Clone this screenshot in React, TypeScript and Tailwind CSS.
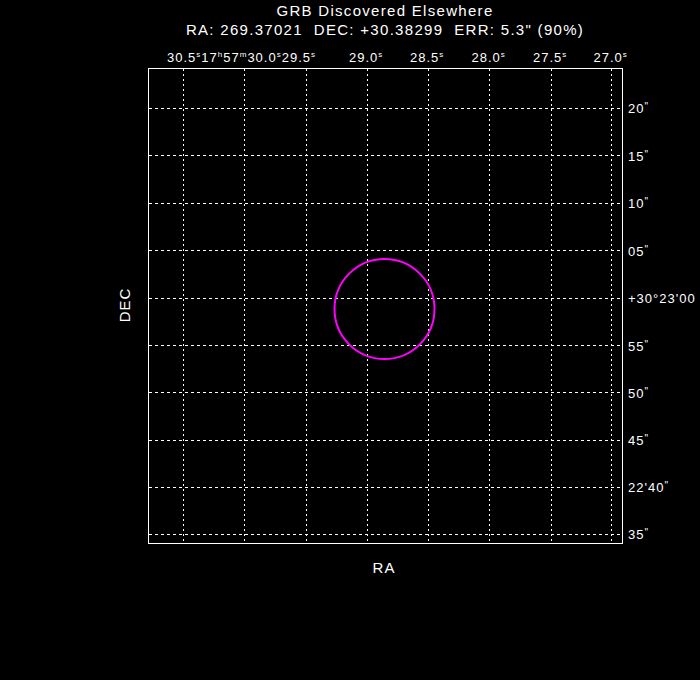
const xs = [183, 244, 306, 367, 428, 489.5, 551, 611.5];
const ys = [108, 155.5, 203, 250.5, 298, 345.5, 392.5, 440, 487, 534];
const decLabels: [string, string][] = [
  ["20", '"'], ["15", '"'], ["10", '"'], ["05", '"'], ["+30°23'00", ""],
  ["55", '"'], ["50", '"'], ["45", '"'], ["22'40", '"'], ["35", '"'],
];
const raLabels: [number, string][] = [
  [367, "29.0"], [428, "28.5"], [489.5, "28.0"], [551, "27.5"], [611.5, "27.0"],
];

export default function App() {
  return (
    <div className="w-[700px] h-[680px] bg-black text-white relative overflow-hidden" style={{ fontFamily: '"Liberation Sans", Arial, sans-serif' }}>
      <div className="pt-[1px] pl-[70px] text-center text-[15px] leading-[19px] tracking-[1.3px]">
        <div>GRB Discovered Elsewhere</div>
        <div className="whitespace-pre">RA: 269.37021  DEC: +30.38299  ERR: 5.3" (90%)</div>
      </div>
      <svg className="absolute left-0 top-0" width="700" height="680" fontFamily='"Liberation Sans", Arial, sans-serif' fill="white" letterSpacing="1" shapeRendering="crispEdges">
        <rect x="148.5" y="68.5" width="474" height="475" fill="none" stroke="white" strokeWidth="1" />
        {xs.map((x) => (
          <line key={x} x1={x} y1="69" x2={x} y2="542" stroke="white" strokeDasharray="2 3" />
        ))}
        {ys.map((y) => (
          <line key={y} x1="149" y1={y} x2="621" y2={y} stroke="white" strokeDasharray="3 3" />
        ))}
        <text x="167" y="62" fontSize="13">30.5<tspan fontSize="8" dy="-5">s</tspan><tspan dy="5">17</tspan><tspan fontSize="8" dy="-5">h</tspan><tspan dy="5">57</tspan><tspan fontSize="8" dy="-5">m</tspan><tspan dy="5">30.0</tspan><tspan fontSize="8" dy="-5">s</tspan><tspan dy="5">29.5</tspan><tspan fontSize="8" dy="-5">s</tspan></text>
        {raLabels.map(([x, t]) => (
          <text key={t} x={x - 18} y="62" fontSize="13">{t}<tspan fontSize="8" dy="-5">s</tspan></text>
        ))}
        {ys.map((y, i) => (
          <text key={y} x="628" y={y + 5} fontSize="13">{decLabels[i][0]}<tspan fontSize="10" dy="-3">{decLabels[i][1]}</tspan></text>
        ))}
        <circle cx="384.5" cy="309" r="50" fill="none" stroke="#ff00ff" strokeWidth="2" shapeRendering="auto" />
        <text x="384" y="573" fontSize="15" textAnchor="middle">RA</text>
        <text x="130" y="305" fontSize="15" textAnchor="middle" transform="rotate(-90 130 305)">DEC</text>
      </svg>
    </div>
  );
}
